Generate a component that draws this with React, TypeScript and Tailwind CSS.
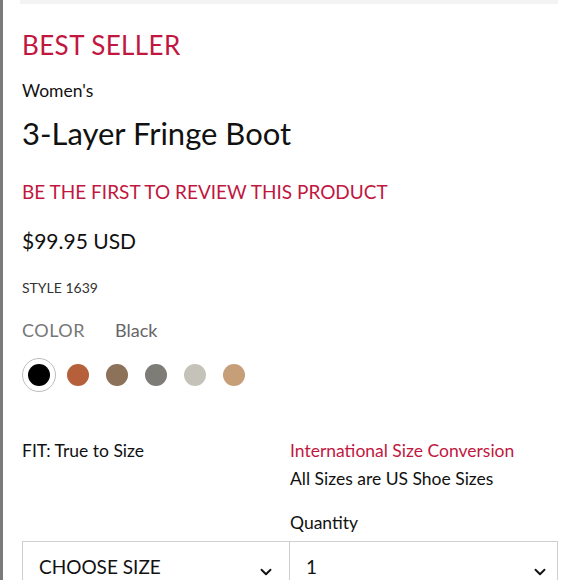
import { ChevronDown } from 'lucide-react';

const swatches = ['#000000', '#b5603a', '#8c7259', '#7d7c77', '#c5c3b9', '#c69e78'];

function SelectBox({ label, className }: { label: string; className?: string }) {
  return (
    <div className={`flex items-center justify-between h-[56px] border border-[#cfcfcf] ${className ?? ''}`}>
      <span className="text-[19px] text-[#111] -mt-[4px]">{label}</span>
      <ChevronDown className="w-[18px] h-[18px] text-[#111] mt-[6px]" strokeWidth={2.5} />
    </div>
  );
}

export default function App() {
  return (
    <div
      className="w-[580px] h-[580px] overflow-hidden bg-white border-l-[3px] border-[#7a7a7a]"
      style={{ fontFamily: 'Lato, "Open Sans", sans-serif' }}
    >
      <div className="ml-[17px] mr-[22px] h-[4px] bg-[#f3f3f3]" />
      <div className="pl-[19px] pr-[22px]">
        <div className="mt-[23px] text-[26px] leading-[36px] text-[#c1173f] tracking-[0.4px]">BEST SELLER</div>
        <div className="mt-[16px] text-[17.5px] leading-[24px] text-[#111]">Women's</div>
        <h1 className="mt-[10px] text-[31px] leading-[40px] text-[#111]">3-Layer Fringe Boot</h1>
        <div className="mt-[26px] text-[19px] leading-[26px] text-[#c1173f]">BE THE FIRST TO REVIEW THIS PRODUCT</div>
        <div className="mt-[22px] text-[21px] leading-[28px] text-[#111]">$99.95 USD</div>
        <div className="mt-[23px] text-[14px] leading-[20px] text-[#333]">STYLE 1639</div>
        <div className="mt-[20px] flex gap-[30px] text-[18px] leading-[24px]">
          <span className="text-[#777] tracking-[0.5px]">COLOR</span>
          <span className="text-[#666]">Black</span>
        </div>
        <div className="mt-[16px] flex items-center gap-[5px]">
          {swatches.map((c, i) => (
            <div
              key={c}
              className={`w-[34px] h-[34px] rounded-full flex items-center justify-center ${i === 0 ? 'border border-[#bdbdbd]' : ''}`}
            >
              <div className="w-[22px] h-[22px] rounded-full" style={{ background: c }} />
            </div>
          ))}
        </div>
        <div className="mt-[45px] grid grid-cols-2">
          <div className="text-[17.5px] leading-[28px] text-[#111]">FIT: True to Size</div>
          <div>
            <div className="text-[17.5px] leading-[28px] text-[#c1173f]">International Size Conversion</div>
            <div className="text-[17.5px] leading-[28px] text-[#111]">All Sizes are US Shoe Sizes</div>
            <div className="mt-[16px] text-[17.5px] leading-[28px] text-[#111]">Quantity</div>
          </div>
        </div>
        <div className="mt-[4px] grid grid-cols-2">
          <SelectBox label="CHOOSE SIZE" className="pl-[16px] pr-[14px]" />
          <SelectBox label="1" className="border-l-0 pl-[16px] pr-[8px]" />
        </div>
      </div>
    </div>
  );
}
